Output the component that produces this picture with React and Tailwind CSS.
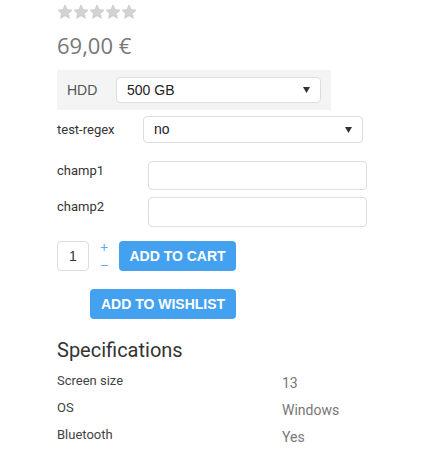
import React from "react";

const Star = () => (
  <svg width="16" height="16" viewBox="0 0 24 24">
    <path
      d="M12 1.5l3.2 6.9 7.3.8-5.4 5 1.5 7.3L12 17.8l-6.6 3.7 1.5-7.3-5.4-5 7.3-.8z"
      fill="#d2d2d2"
      stroke="#c4c4c4"
      strokeWidth="1"
    />
  </svg>
);

const Caret = () => (
  <svg width="7" height="6" viewBox="0 0 7 6" className="shrink-0">
    <path d="M0 0h7L3.5 6z" fill="#333" />
  </svg>
);

function FakeSelect({ value, className }) {
  return (
    <div
      className={
        "flex items-center justify-between bg-white border border-[#ddd] rounded-[4px] pl-[10px] pr-[10px] text-[14px] text-[#222] font-['Liberation_Sans',sans-serif] " +
        className
      }
    >
      <span>{value}</span>
      <Caret />
    </div>
  );
}

const specs = [
  ["Screen size", "13"],
  ["OS", "Windows"],
  ["Bluetooth", "Yes"],
];

export default function App() {
  return (
    <div className="min-h-screen bg-white pl-[57px] pt-[4px] font-['Roboto',sans-serif]">
      <div className="flex gap-0">
        {[0, 1, 2, 3, 4].map((i) => (
          <Star key={i} />
        ))}
      </div>

      <div className="mt-[10px] text-[22px] leading-[30px] text-[#777] font-['Open_Sans',sans-serif]">
        69,00 €
      </div>

      <div className="mt-[10px] w-[274px] h-[40px] bg-[#f4f4f4] flex items-center pl-[10px]">
        <span className="w-[49px] text-[14px] text-[#555] font-['Liberation_Sans',sans-serif]">HDD</span>
        <FakeSelect value="500 GB" className="w-[205px] h-[26px]" />
      </div>

      <div className="mt-[6px] flex items-center">
        <span className="w-[86px] text-[13px] text-[#333]">test-regex</span>
        <FakeSelect value="no" className="w-[220px] h-[27px]" />
      </div>

      <div className="mt-[18px] flex items-start">
        <span className="w-[91px] text-[13px] text-[#333]">champ1</span>
        <div className="w-[219px] h-[29px] border border-[#ddd] rounded-[4px] bg-white" />
      </div>

      <div className="mt-[7px] flex items-start">
        <span className="w-[91px] text-[13px] text-[#333]">champ2</span>
        <div className="w-[219px] h-[30px] border border-[#ddd] rounded-[4px] bg-white" />
      </div>

      <div className="mt-[14px] flex items-center">
        <div className="w-[32px] h-[30px] border border-[#ddd] rounded-[4px] flex items-center justify-center text-[14px] text-[#333] font-['Liberation_Sans',sans-serif]">
          1
        </div>
        <div className="w-[30px] h-[30px] flex flex-col items-center justify-between text-[#5aabf2] text-[14px] leading-[12px] font-['Liberation_Sans',sans-serif]">
          <span>+</span>
          <span>−</span>
        </div>
        <button className="w-[117px] h-[30px] bg-[#43a1ef] rounded-[4px] text-white font-bold text-[14px] font-['Liberation_Sans',sans-serif]">
          ADD TO CART
        </button>
      </div>

      <button className="mt-[18px] ml-[33px] w-[146px] h-[30px] bg-[#43a1ef] rounded-[4px] text-white font-bold text-[14px] font-['Liberation_Sans',sans-serif] block">
        ADD TO WISHLIST
      </button>

      <h2 className="mt-[18px] text-[20px] leading-[26px] text-[#333]">Specifications</h2>

      <div className="mt-[8px] w-[300px]">
        {specs.map(([k, v]) => (
          <div key={k} className="flex h-[27px]">
            <span className="w-[225px] text-[13px] text-[#444]">{k}</span>
            <span className="text-[14px] text-[#777] pt-[2px]">{v}</span>
          </div>
        ))}
      </div>
    </div>
  );
}
